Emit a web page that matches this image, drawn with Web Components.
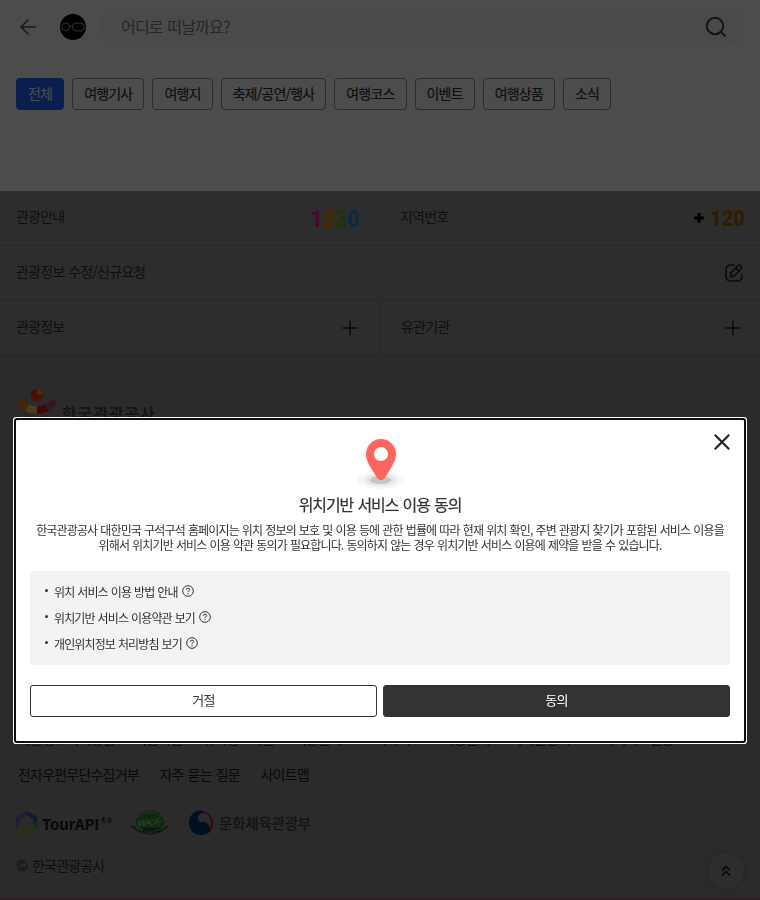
<!DOCTYPE html>
<html lang="ko">
<head>
<meta charset="utf-8">
<title>대한민국 구석구석</title>
<style>
    html, body {
        margin: 0;
        height: 900px;
        overflow: hidden;
        background-color: #4c4c4c;
        font-family: "Noto Sans CJK KR", sans-serif;
        font-size: 14px;
        letter-spacing: -0.8px;
        word-spacing: 0.8px;
        color: #0f0f0f;
    }
</style>
</head>
<body>
<search-header></search-header>
<category-tabs>
    <tab-chip active>전체</tab-chip>
    <tab-chip>여행기사</tab-chip>
    <tab-chip>여행지</tab-chip>
    <tab-chip>축제/공연/행사</tab-chip>
    <tab-chip>여행코스</tab-chip>
    <tab-chip>이벤트</tab-chip>
    <tab-chip>여행상품</tab-chip>
    <tab-chip>소식</tab-chip>
</category-tabs>
<info-menu></info-menu>
<site-footer></site-footer>
<top-button></top-button>
<consent-dialog>
    <span slot="title">위치기반 서비스 이용 동의</span>
    <span slot="text">한국관광공사 대한민국 구석구석 홈페이지는 위치 정보의 보호 및 이용 등에 관한 법률에 따라 현재 위치 확인, 주변 관광지 찾기가 포함된 서비스 이용을<br>위해서 위치기반 서비스 이용 약관 동의가 필요합니다. 동의하지 않는 경우 위치기반 서비스 이용에 제약을 받을 수 있습니다.</span>
    <help-item>위치 서비스 이용 방법 안내</help-item>
    <help-item>위치기반 서비스 이용약관 보기</help-item>
    <help-item>개인위치정보 처리방침 보기</help-item>
</consent-dialog>

<script>
class BaseElement extends HTMLElement {

    constructor(){
        super();
        this.shadowDOM = this.attachShadow({mode: "open"});
    }

    connectedCallback(){
        this.render();
    }
}

class SearchHeader extends BaseElement {
    render(){
        this.shadowDOM.innerHTML = `
        <style>
            :host {
                display: flex;
                align-items: center;
                box-sizing: border-box;
                height: 54px;
                padding: 0 16px 0 18px;
            }

            svg {
                display: block;
                flex: none;
            }

            .logo {
                margin: 0 14px 0 22px;
            }

            .search {
                display: flex;
                align-items: center;
                justify-content: space-between;
                flex: 1;
                height: 38px;
                padding: 0 16px 0 21px;
                border-radius: 19px;
                background-color: #4a4a4c;
                color: #262626;
                font-size: 16px;
                box-sizing: border-box;
            }

            .search span {
                margin-top: -2px;
            }
        </style>
        <svg width="20" height="20" viewBox="0 0 20 20" fill="none" stroke="#1a1a1a" stroke-width="1.6">
            <path d="M10.5 2.5L3 10l7.500 7.500M3 10h15"/>
        </svg>
        <svg class="logo" width="26" height="26" viewBox="0 0 26 26" fill="none" stroke="#484848" stroke-width=".7">
            <circle cx="13" cy="13" r="13" fill="#000" stroke="none"/>
            <circle cx="5.700" cy="13" r="4"/>
            <rect x="12.500" y="9" width="12" height="8" rx="4"/>
            <path d="M9.700 12.600q1.400-.8 2.800 0"/>
        </svg>
        <div class="search">
            <span>어디로 떠날까요?</span>
            <svg width="24" height="24" viewBox="0 0 24 24" fill="none" stroke="#141414" stroke-width="2">
                <circle cx="11" cy="11" r="8.200"/>
                <path d="M17 17l4.500 4.500"/>
            </svg>
        </div>`;
    }
}

class CategoryTabs extends BaseElement {
    render(){
        this.shadowDOM.innerHTML = `
        <style>
            :host {
                display: flex;
                gap: 8px;
                height: 32px;
                padding: 24px 16px 81px;
            }
        </style>
        <slot></slot>`;
    }
}

class TabChip extends BaseElement {
    render(){
        this.shadowDOM.innerHTML = `
        <style>
            :host {
                display: flex;
                align-items: center;
                box-sizing: border-box;
                height: 32px;
                padding: 0 11px 2px;
                border: 1px solid #2b2b2b;
                border-radius: 4px;
                white-space: nowrap;
                letter-spacing: -0.82px;
                -webkit-text-stroke: 0.2px currentColor;
            }

            :host([active]) {
                background-color: #0b1f4e;
                border-color: #0b1f4e;
                color: #4c4c4c;
            }
        </style>
        <slot></slot>`;
    }
}

class InfoMenu extends BaseElement {
    render(){
        const plus = `
        <svg width="16" height="16" viewBox="0 0 16 16" stroke="#0b0b0b" stroke-width="1.5">
            <path d="M8 .5v15M.5 8h15"/>
        </svg>`;

        this.shadowDOM.innerHTML = `
        <style>
            :host {
                display: block;
                background-color: #2d2d2d;
            }

            .row {
                display: flex;
                height: 54px;
                border-bottom: 1px solid #272727;
            }

            .cell {
                display: flex;
                flex: 1;
                align-items: center;
                justify-content: space-between;
                padding: 0 16px;
            }

            .cell span {
                margin-top: -4px;
            }

            .first {
                flex: none;
                width: 343px;
                padding-right: 21px;
            }

            .second {
                padding-left: 20px;
            }

            .divider {
                border-left: 1px solid #272727;
            }

            svg {
                display: block;
                overflow: visible;
            }

            text {
                font-family: Roboto, sans-serif;
                font-weight: 900;
                letter-spacing: 0;
            }

            .local {
                display: flex;
                align-items: center;
                gap: 7px;
            }
        </style>
        <div class="row">
            <div class="cell first">
                <span>관광안내</span>
                <svg width="48" height="34" viewBox="0 0 48 34" font-size="24.500">
                    <text x="-.5" y="25.500" textLength="49" lengthAdjust="spacingAndGlyphs"><tspan fill="#480a2b">1</tspan><tspan fill="#4a2900">3</tspan><tspan fill="#1b3509">3</tspan><tspan fill="#082b43">0</tspan></text>
                </svg>
            </div>
            <div class="cell second">
                <span>지역번호</span>
                <div class="local">
                    <svg width="10" height="10" viewBox="0 0 10 10" stroke="#000" stroke-width="3.200"><path d="M5 0v10M0 5h10"/></svg>
                    <svg width="33" height="32" viewBox="0 0 33 32" font-size="22.500" fill="#331c00">
                        <text x="-1" y="23.500" textLength="35" lengthAdjust="spacingAndGlyphs">120</text>
                    </svg>
                </div>
            </div>
        </div>
        <div class="row">
            <div class="cell">
                <span>관광정보 수정/신규요청</span>
                <svg width="20" height="20" viewBox="0 0 20 20" fill="none" stroke="#0b0b0b" stroke-width="1.600" stroke-linejoin="round">
                    <path d="M10.500 2H7Q2 2 2 7v6q0 5 5 5h6q5 0 5-5v-2.500"/>
                    <path d="M6.500 13.800l.4-4 6.700-6.900q1.600-1.500 3.200 0 1.600 1.700 0 3.300l-6.700 6.900zM12.200 4.500q.5 2.500 3.200 3.200"/>
                </svg>
            </div>
        </div>
        <div class="row">
            <div class="cell first" style="padding-right:22px;width:342px"><span>관광정보</span>${plus}</div>
            <div class="cell second divider" style="padding-right:19px"><span>유관기관</span>${plus}</div>
        </div>`;
    }
}

class SiteFooter extends BaseElement {
    render(){
        this.shadowDOM.innerHTML = `
        <style>
            :host {
                display: flex;
                flex-direction: column;
                box-sizing: border-box;
                height: 544px;
                padding: 32px 16px 0;
                background-color: #2b2b2b;
                border-bottom: 2px solid #291f25;
            }

            svg {
                display: block;
                flex: none;
                overflow: visible;
            }

            .company {
                display: flex;
                align-items: center;
                gap: 4px;
                height: 50px;
                color: #151515;
                font-size: 16px;
                font-weight: 700;
                letter-spacing: 0.9px;
            }

            .links {
                margin-top: 282px;
                padding-left: 2px;
                color: #090909;
            }

            .links div {
                display: flex;
                gap: 20.700px;
                height: 36px;
                line-height: 36px;
                white-space: nowrap;
            }

            .links div:first-child {
                gap: 19.500px;
            }

            .links b {
                color: #06102b;
                font-weight: 500;
            }

            .marks {
                display: flex;
                align-items: center;
                height: 28px;
                margin-top: 17px;
            }

            .api {
                width: 58px;
                margin-left: 5px;
                color: #080808;
                font-size: 15px;
                font-weight: 700;
                letter-spacing: -0.1px;
            }

            .version {
                width: 12px;
                margin: -6px 18px 0 1px;
                color: #080808;
                font-size: 7px;
                font-weight: 700;
                letter-spacing: 0;
            }

            .ministry {
                margin: -2px 0 0 5px;
                color: #131313;
                font-size: 14.500px;
                font-weight: 500;
                letter-spacing: -0.2px;
            }

            .copyright {
                display: flex;
                gap: 4px;
                margin-top: 18px;
                line-height: 20px;
            }

            .copyright i {
                width: 12px;
                font: 500 15px/22px Roboto, sans-serif;
            }
        </style>
        <div class="company">
            <svg width="42" height="50" viewBox="0 0 42 50">
                <circle cx="21" cy="7" r="6.300" fill="#4d0a0b"/>
                <path d="M21 .7a6.300 6.300 0 0 1 6.300 6.300H21z" fill="#4b2c05"/>
                <path d="M21 7h6.300a6.300 6.300 0 0 1-6.300 6.300z" fill="#3e170c"/>
                <g fill="none" stroke-width="7.500">
                    <path d="M5 15.500Q13 22 21 22" stroke="#432706" stroke-linecap="round"/>
                    <path d="M37 15.500Q29 22 21 22" stroke="#321925" stroke-linecap="round"/>
                    <path d="M11 19.700Q15.500 22 21 22" stroke="#47401b"/>
                    <path d="M31 19.700Q26.500 22 21 22" stroke="#3d080c"/>
                    <path d="M14 29q-5 5-7 15" stroke="#321925"/>
                    <path d="M28 29q5 5 7 15" stroke="#321925"/>
                </g>
            </svg>
            한국관광공사
        </div>
        <div class="links">
            <div>
                <b>개인정보처리방침</b><span>이용약관</span><span>위치정보약관</span><span>이용안내</span><span>고객서비스</span><span>이용안내</span><span>저작권정책</span><span>고객서비스헌장</span>
            </div>
            <div>
                <span>전자우편무단수집거부</span><span>자주 묻는 질문</span><span>사이트맵</span>
            </div>
        </div>
        <div class="marks">
            <svg width="21" height="24" viewBox="0 0 21 24" fill="none" stroke-width="3.600">
                <path d="M10.500 2L1.800 7v9.500" stroke="#211e32"/>
                <path d="M10.500 2l8.700 5v6" stroke="#101a38"/>
                <path d="M19.200 11v6" stroke="#15282b"/>
                <path d="M1.800 16l8.700 6 8.700-6" stroke="#29340f"/>
            </svg>
            <span class="api">TourAPI</span><span class="version">4.0</span>
            <svg width="38" height="26" viewBox="0 0 38 26">
                <path d="M8 5q11-7 22 0" fill="none" stroke="#0b250f" stroke-width="2" stroke-dasharray="1.500 1"/>
                <ellipse cx="19" cy="12" rx="14.500" ry="8.500" fill="#0b2a10"/>
                <text x="6.500" y="15.500" font-family="Liberation Sans" font-size="9.500" font-weight="700" font-style="italic" letter-spacing="-.8" fill="#303c30">WA</text>
                <path d="M20 9l5 3-5 4M23 15l6-7M24 12h7M26 8l2 8" stroke="#313b20" stroke-width="1" fill="none"/>
                <path d="M1 16q18 15 36 0" fill="none" stroke="#101510" stroke-width="2" stroke-dasharray="2 .7"/>
                <text x="11.500" y="22" font-family="Liberation Sans" font-size="5" font-weight="700" letter-spacing="0" fill="#0a0a0a">KWACC</text>
            </svg>
            <svg width="26" height="26" viewBox="0 0 26 26" style="margin-left:19px">
                <path d="M7 2.500C16-2 26 5 25.500 14c-.5 5-3 8.500-6.500 10.500 4-4 5-10 2-14.500-3-5-9-5-14-7.500z" fill="#3c080f"/>
                <path d="M17 1.500Q11-1 5.500 3A12.600 12.600 0 0 0 6 23c6 4 14 2 16-3 1.500-4-1.500-8-6.500-8-4 0-5.500-1.500-5.500-4 0-3 3-6 7-6.500z" fill="#001021"/>
                <path d="M10 8c0-3 3-5.500 6.500-5 4 1 6 4.500 6 9 0 2-.3 3.500-.8 5-1-3-3-5-6.200-5-4 0-5.500-1.500-5.500-4z" fill="#2b2b2b"/>
            </svg>
            <span class="ministry">문화체육관광부</span>
        </div>
        <div class="copyright"><i>©</i><span>한국관광공사</span></div>`;
    }
}

class TopButton extends BaseElement {
    render(){
        this.shadowDOM.innerHTML = `
        <style>
            :host {
                position: fixed;
                right: 16px;
                bottom: 11px;
                display: flex;
                align-items: center;
                justify-content: center;
                width: 36px;
                height: 36px;
                border-radius: 50%;
                background-color: #2d2d2d;
                box-shadow: 0 0 6px rgba(0, 0, 0, 0.15);
            }
        </style>
        <svg width="12" height="12" viewBox="0 0 12 12" fill="none" stroke="#050505" stroke-width="1.500">
            <path d="M1.800 5.500L6 1.500l4.200 4M1.800 10.500L6 6.500l4.200 4"/>
        </svg>`;
    }
}

class HelpItem extends BaseElement {
    render(){
        this.shadowDOM.innerHTML = `
        <style>
            :host {
                display: flex;
                align-items: center;
                height: 26px;
            }

            i {
                width: 3px;
                height: 3px;
                margin: -2px 6px 0 0;
                border-radius: 50%;
                background-color: #333;
            }

            svg {
                margin-left: 4px;
            }
        </style>
        <i></i>
        <slot></slot>
        <svg width="12" height="12" viewBox="0 0 11 11" fill="none" stroke="#333" stroke-width=".9">
            <circle cx="5.500" cy="5.500" r="4.900"/>
            <path d="M3.900 4.400q0-1.500 1.600-1.500t1.600 1.300q0 .8-.9 1.200t-.7 1.200"/>
            <path d="M5.500 7.500v1"/>
        </svg>`;
    }
}

class ConsentDialog extends BaseElement {
    render(){
        this.shadowDOM.innerHTML = `
        <style>
            :host {
                position: fixed;
                top: 420px;
                left: 16px;
                right: 16px;
                height: 321px;
                box-sizing: border-box;
                padding: 19px 14px 0;
                border-radius: 1px;
                background-color: #fff;
                box-shadow: 0 0 0 2px #101010, 0 0 0 3px #fff;
                color: #333;
                text-align: center;
            }

            .close {
                position: absolute;
                top: 14px;
                right: 14px;
            }

            .pin {
                display: block;
                margin: 0 auto;
            }

            h2 {
                margin: 3px 0 0;
                font-size: 16px;
                font-weight: 400;
                line-height: 24px;
                letter-spacing: -1.08px;
                -webkit-text-stroke: 0.2px #333;
            }

            p {
                margin: 6px -10px 0;
                font-size: 12px;
                line-height: 15px;
                letter-spacing: -0.85px;
                word-spacing: 0.52px;
                white-space: nowrap;
            }

            .list {
                display: flex;
                flex-direction: column;
                box-sizing: border-box;
                height: 94px;
                margin-top: 19px;
                padding: 7px 15px;
                border-radius: 3px;
                background-color: #f1f3f5;
                font-size: 12px;
                letter-spacing: -0.88px;
                word-spacing: 0.5px;
            }

            .buttons {
                display: flex;
                gap: 6px;
                margin-top: 20px;
            }

            button {
                flex: 1;
                height: 32px;
                padding: 0 0 3px;
                border: 1px solid #333;
                border-radius: 3px;
                background-color: #fff;
                color: #333;
                font: inherit;
                font-size: 13px;
                letter-spacing: -0.8px;
            }

            .agree {
                background-color: #333;
                color: #fff;
            }
        </style>
        <svg class="close" width="16" height="16" viewBox="0 0 16 16" stroke="#222" stroke-width="2.100">
            <path d="M.8.8l14.400 14.400M15.200.8L.8 15.200"/>
        </svg>
        <svg class="pin" width="48" height="50" viewBox="0 0 48 50">
            <ellipse cx="24.500" cy="41" rx="23.500" ry="9" fill="#f7f7f7"/>
            <ellipse cx="24.500" cy="41" rx="16.500" ry="6.500" fill="#e8e8e8"/>
            <ellipse cx="24.500" cy="41" rx="11" ry="4" fill="#c6c6c6"/>
            <path d="M25 0a15 15 0 0 1 15 15c0 6-3 10-5 14l-6.500 10.500q-3.500 3.500-7 0L15 29c-2-4-5-8-5-14A15 15 0 0 1 25 0z" fill="#ff655d"/>
            <circle cx="25" cy="15" r="7" fill="#fff"/>
        </svg>
        <h2><slot name="title"></slot></h2>
        <p><slot name="text"></slot></p>
        <div class="list"><slot></slot></div>
        <div class="buttons">
            <button>거절</button>
            <button class="agree">동의</button>
        </div>`;
    }
}

customElements.define("search-header", SearchHeader);
customElements.define("category-tabs", CategoryTabs);
customElements.define("tab-chip", TabChip);
customElements.define("info-menu", InfoMenu);
customElements.define("site-footer", SiteFooter);
customElements.define("top-button", TopButton);
customElements.define("help-item", HelpItem);
customElements.define("consent-dialog", ConsentDialog);
</script>
</body>
</html>
